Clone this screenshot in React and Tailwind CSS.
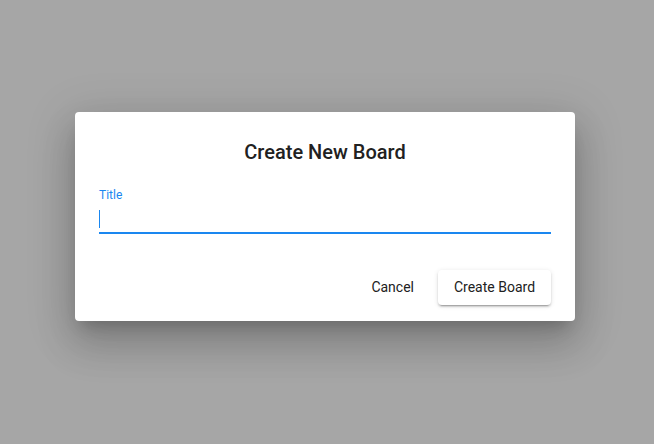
export default function App() {
  return (
    <div className="w-[654px] h-[444px] bg-[#a6a6a6] flex items-start justify-start pt-[112px] pl-[75px]" style={{ fontFamily: 'Roboto, "Liberation Sans", sans-serif' }}>
      <div className="w-[500px] h-[209px] bg-white rounded-[4px] shadow-[0_11px_15px_-7px_rgba(0,0,0,0.2),0_24px_38px_3px_rgba(0,0,0,0.14),0_9px_46px_8px_rgba(0,0,0,0.12)] flex flex-col">
        <div className="pt-[28px] text-center text-[20px] leading-[24px] font-medium text-[#212121]">Create New Board</div>
        <div className="px-[24px] pt-[24px]">
          <div className="text-[12px] leading-[14px] text-[#1a87f0]">Title</div>
          <div className="mt-[6px] h-[26px] border-b-2 border-[#1a87f0] flex items-start">
            <div className="w-[1px] h-[18px] bg-[#1a87f0] mt-[2px]"></div>
          </div>
        </div>
        <div className="flex justify-end items-center px-[24px] pt-[36px] gap-[8px]">
          <button className="h-[35px] px-[16px] text-[14px] text-[#212121] rounded-[4px]">Cancel</button>
          <button className="h-[35px] w-[113px] text-[14px] text-[#212121] bg-white rounded-[4px] shadow-[0_3px_1px_-2px_rgba(0,0,0,0.2),0_2px_2px_0_rgba(0,0,0,0.14),0_1px_5px_0_rgba(0,0,0,0.12)]">Create Board</button>
        </div>
      </div>
    </div>
  );
}
